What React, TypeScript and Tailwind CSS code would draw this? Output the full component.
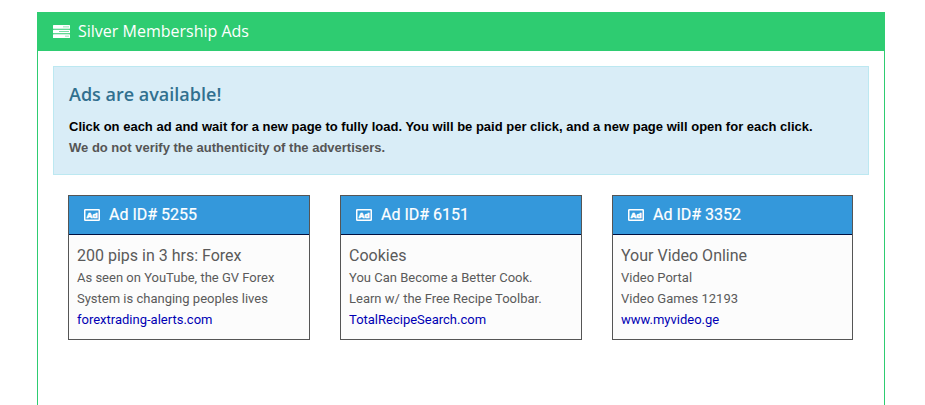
interface Ad {
  id: number;
  title: string;
  lines: string[];
  url: string;
}

const ads: Ad[] = [
  {
    id: 5255,
    title: '200 pips in 3 hrs: Forex',
    lines: ['As seen on YouTube, the GV Forex', 'System is changing peoples lives'],
    url: 'forextrading-alerts.com',
  },
  {
    id: 6151,
    title: 'Cookies',
    lines: ['You Can Become a Better Cook.', 'Learn w/ the Free Recipe Toolbar.'],
    url: 'TotalRecipeSearch.com',
  },
  {
    id: 3352,
    title: 'Your Video Online',
    lines: ['Video Portal', 'Video Games 12193'],
    url: 'www.myvideo.ge',
  },
];

const TasksIcon = () => (
  <svg className="-mt-0.5 h-[13px] w-[17px]" viewBox="0 0 17 13" fill="#fff">
    <rect x="0" y="0" width="17" height="3.7" rx="0.5" />
    <rect x="0" y="4.8" width="17" height="3.4" rx="0.5" />
    <rect x="0" y="9.2" width="17" height="3.8" rx="0.5" />
    <path d="M10 1.5h6v.8h-6zM6 6.1h10v.8H6zM12 10.7h4v.8h-4z" fill="#2ecc71" fillOpacity="0.65" />
  </svg>
);

const AdIcon = () => (
  <svg className="-mt-px h-3 w-4" viewBox="0 0 16 12">
    <rect x="0.75" y="0.75" width="14.5" height="10.5" rx="0.6" fill="none" stroke="#fff" strokeWidth="1.5" />
    <text
      x="8"
      y="9"
      textAnchor="middle"
      textLength="11"
      lengthAdjust="spacingAndGlyphs"
      fill="#fff"
      stroke="#fff"
      strokeWidth="0.6"
      className="font-['Liberation_Sans',sans-serif] text-[8px] font-bold"
    >
      Ad
    </text>
  </svg>
);

const AdCard = ({ ad }: { ad: Ad }) => (
  <div className="h-[145px] border border-[#555] bg-[#fcfcfc] font-['Roboto',sans-serif]">
    <div className="flex h-[39px] items-center border-b border-[#001040] bg-[#3498db] pl-[15px] text-base text-white">
      <AdIcon />
      <span className="ml-[9px] [-webkit-text-stroke:0.2px_#fff]">Ad ID# {ad.id}</span>
    </div>
    <div className="px-2 pt-[10px] text-[13px] leading-[21px] text-[#5a5a5a]">
      <h4 className="text-base leading-[22px]">{ad.title}</h4>
      {ad.lines.map((line) => (
        <p key={line}>{line}</p>
      ))}
      <a href="#" className="block text-[#0000b4]">{ad.url}</a>
    </div>
  </div>
);

export default function App() {
  return (
    <div className="h-[405px] overflow-hidden bg-white pl-[37px] pt-3">
      <div className="h-[500px] w-[848px] border border-[#2ecc71]">
        <div className="flex h-[38px] items-center bg-[#2ecc71] pl-[15px] font-['Open_Sans',sans-serif] text-base text-white">
          <TasksIcon />
          <h3 className="-mt-0.5 ml-2">Silver Membership Ads</h3>
        </div>
        <div className="px-[15px] pt-[15px]">
          <div className="h-[109px] border border-[#bce8f1] bg-[#d9edf7] px-[15px] pt-[17px]">
            <h4 className="font-['Open_Sans',sans-serif] text-lg font-semibold leading-5 text-[#31708f]">
              Ads are available!
            </h4>
            <div className="mt-[12px] font-['Liberation_Sans',sans-serif] text-[13px] font-bold leading-[21px] text-[#555]">
              <p className="text-black">
                Click on each ad and wait for a new page to fully load. You will be paid per click, and a new page will open for each click.
              </p>
              <p>We do not verify the authenticity of the advertisers.</p>
            </div>
          </div>
          <div className="mt-5 grid grid-cols-[242px_242px_241px] gap-[30px] px-[15px]">
            {ads.map((ad) => (
              <AdCard key={ad.id} ad={ad} />
            ))}
          </div>
        </div>
      </div>
    </div>
  );
}
